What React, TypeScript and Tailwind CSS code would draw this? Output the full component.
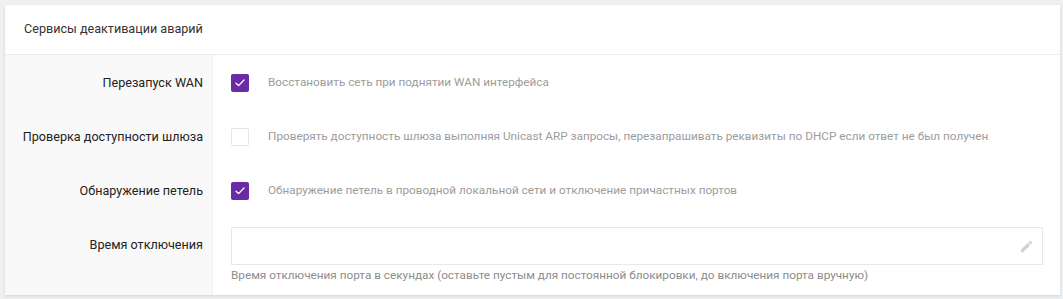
interface Row {
  label: string;
  checked: boolean;
  text: string;
}

const rows: Row[] = [
  { label: 'Перезапуск WAN', checked: true, text: 'Восстановить сеть при поднятии WAN интерфейса' },
  {
    label: 'Проверка доступности шлюза',
    checked: false,
    text: 'Проверять доступность шлюза выполняя Unicast ARP запросы, перезапрашивать реквизиты по DHCP если ответ не был получен',
  },
  {
    label: 'Обнаружение петель',
    checked: true,
    text: 'Обнаружение петель в проводной локальной сети и отключение причастных портов',
  },
];

function Checkbox({ checked }: { checked: boolean }) {
  if (!checked) {
    return <span className="block w-[18px] h-[18px] rounded-[2px] border border-[#e6e6e6] bg-white shrink-0" />;
  }
  return (
    <span className="flex items-center justify-center w-[18px] h-[18px] rounded-[2px] bg-[#6b2aa6] shrink-0">
      <svg width="10" height="8" viewBox="0 0 10 8" fill="none">
        <path d="M1 4.2 3.6 6.6 9 1" stroke="white" strokeWidth="1.3" strokeLinecap="round" strokeLinejoin="round" />
      </svg>
    </span>
  );
}

export default function App() {
  return (
    <div className="min-h-screen bg-[#eef0f2] pt-[5px] pl-[5px] font-['Roboto',sans-serif] text-[12.6px]">
      <div className="w-[1055px] bg-white shadow-[0_1px_3px_rgba(0,0,0,0.12)]">
        <div className="h-[50px] flex items-center px-[19px] border-b border-[#ececec] text-[#333]">
          Сервисы деактивации аварий
        </div>
        {rows.map((row) => (
          <div key={row.label} className="flex">
            <div className="w-[208px] shrink-0 bg-[#f9f9f9] border-r border-[#f0f0f0] flex items-center justify-end pr-[9px] pt-[2px] text-[#222] h-[54px]">
              {row.label}
            </div>
            <div className="flex-1 flex items-center gap-[19px] pl-[18px] pt-[2px] text-[11.75px] text-[#9c9c9c] h-[54px]">
              <Checkbox checked={row.checked} />
              <span>{row.text}</span>
            </div>
          </div>
        ))}
        <div className="flex">
          <div className="w-[208px] shrink-0 bg-[#f9f9f9] border-r border-[#f0f0f0] flex justify-end pr-[9px] pt-[19px] text-[#222]">
            Время отключения
          </div>
          <div className="flex-1 pl-[18px] pr-[17px] pt-[10px] pb-[10px]">
            <div className="h-[38px] border border-[#e8e8e8] flex items-center justify-end pr-[8px]">
              <svg width="15" height="15" viewBox="0 0 24 24" fill="#d2d2d2">
                <path d="M3 17.25V21h3.75L17.81 9.94l-3.75-3.75L3 17.25zM20.71 7.04c.39-.39.39-1.02 0-1.41l-2.34-2.34c-.39-.39-1.02-.39-1.41 0l-1.83 1.83 3.75 3.75 1.83-1.83z" />
              </svg>
            </div>
            <div className="mt-[2px] text-[11.75px] text-[#8c8c8c]">
              Время отключения порта в секундах (оставьте пустым для постоянной блокировки, до включения порта вручную)
            </div>
          </div>
        </div>
      </div>
    </div>
  );
}
